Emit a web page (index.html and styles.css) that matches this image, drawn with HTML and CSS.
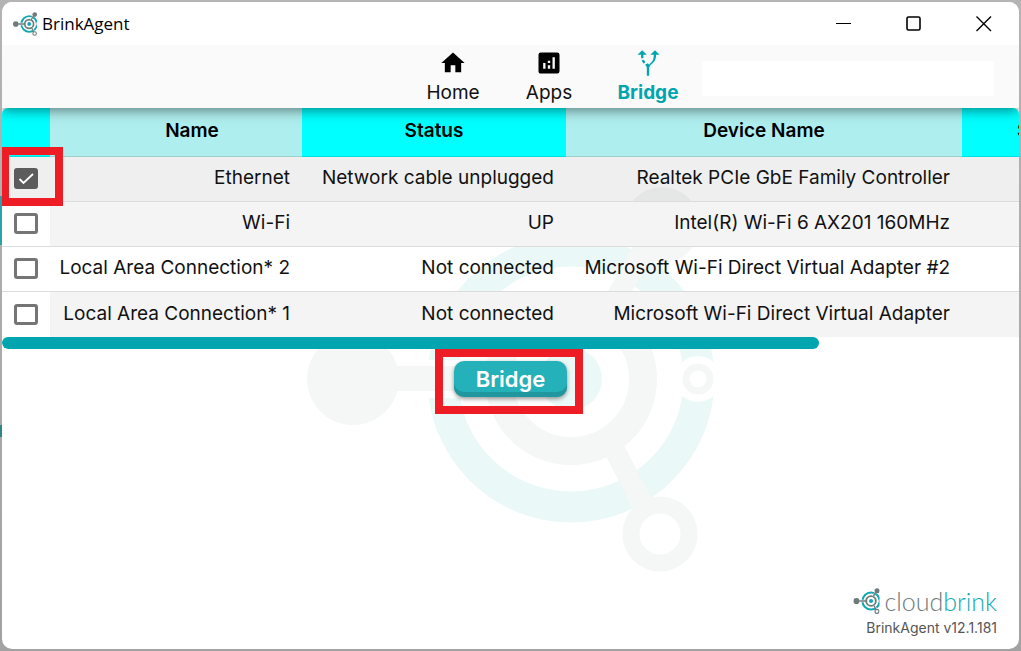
FILE: index.html
```
<!DOCTYPE html>
<html lang="en">
<head>
<meta charset="utf-8">
<meta name="viewport" content="width=device-width, initial-scale=1">
<title>BrinkAgent</title>
<link rel="stylesheet" href="styles.css">
</head>
<body>
<svg class="defs" aria-hidden="true">
  <symbol id="logo" viewBox="0 0 392 388">
    <circle cx="264" cy="194" r="128" fill="none" stroke="var(--ring)" stroke-width="31"/>
    <path d="M108 175h56v38h-56z" fill="#fff"/>
    <circle cx="264" cy="194" r="72" fill="none" stroke="var(--node)" stroke-width="28"/>
    <circle cx="264" cy="194" r="31" fill="var(--ring)"/>
    <circle cx="46" cy="194" r="46" fill="var(--node)"/>
    <path d="M90 182h98v24h-98z" fill="var(--node)"/>
    <path d="M294 124l48-84M314 256l29 58" stroke="#fff" stroke-width="25"/>
    <path d="M296 128l48-86M308 262l30 60" stroke="var(--node)" stroke-width="21"/>
    <circle cx="355" cy="40" r="38" fill="var(--node)"/>
    <circle cx="353" cy="349" r="29" fill="#fff" stroke="var(--node)" stroke-width="17"/>
    <circle cx="391" cy="194" r="23" fill="#fff"/>
    <circle cx="391" cy="194" r="12" fill="none" stroke="var(--node)" stroke-width="7"/>
  </symbol>
</svg>

<div class="window">
  <svg class="watermark" viewBox="0 0 408 388" aria-hidden="true">
    <circle cx="264" cy="194" r="128" fill="none" stroke="#ebf8f8" stroke-width="31"/>
    <path d="M108 175h56v38h-56z" fill="#fff"/>
    <circle cx="264" cy="194" r="72" fill="none" stroke="#f4f7f6" stroke-width="28"/>
    <circle cx="264" cy="194" r="31" fill="#ebf8f8"/>
    <circle cx="46" cy="194" r="46" fill="#f4f7f6"/>
    <path d="M90 181h98v25h-98z" fill="#f4f7f6"/>
    <path d="M302 126l46-82M304 258l34 66" stroke="#f4f7f6" stroke-width="21"/>
    <circle cx="355" cy="40" r="38" fill="#f4f7f6"/>
    <circle cx="353" cy="349" r="29" fill="#fff" stroke="#f4f7f6" stroke-width="17"/>
    <circle cx="391" cy="194" r="23" fill="#fff"/>
    <circle cx="391" cy="194" r="12" fill="none" stroke="#f4f7f6" stroke-width="7"/>
  </svg>

  <header class="titlebar">
    <svg class="app-icon" viewBox="0 0 408 388" aria-hidden="true"><use href="#logo" width="392" height="388"/></svg>
    <h1 class="app-title">BrinkAgent</h1>
    <div class="controls">
      <button type="button" class="control" aria-label="Minimize"><svg viewBox="0 0 16 16"><path d="M0 7.500h15" /></svg></button>
      <button type="button" class="control" aria-label="Maximize"><svg viewBox="0 0 16 16"><rect x="1" y="1" width="13" height="13" rx="1.500" stroke-width="1.600"/></svg></button>
      <button type="button" class="control" aria-label="Close"><svg viewBox="0 0 16 16"><path d="M.5.5l14.500 14.500M15 .5L.5 15" stroke-width="1.400"/></svg></button>
    </div>
  </header>

  <nav class="nav">
    <a class="tab" href="#home"><svg viewBox="0 0 24 24"><path d="M10 20v-6h4v6h5v-8h3L12 3 2 12h3v8z"/></svg>Home</a>
    <a class="tab" href="#apps"><svg viewBox="0 0 24 24"><path d="M19 3H5a2 2 0 0 0-2 2v14c0 1.100.9 2 2 2h14a2 2 0 0 0 2-2V5a2 2 0 0 0-2-2zM9 17H7v-5h2v5zm4 0h-2v-3h2v3zm0-5h-2v-2h2v2zm4 5h-2V7h2v10z"/></svg>Apps</a>
    <a class="tab active" href="#bridge" aria-current="page"><svg viewBox="0 0 24 24"><path d="M9.780 11.160l-1.420 1.420a7.280 7.280 0 0 1-1.790-2.940l1.940-.49c.32.890.77 1.500 1.270 2.010zM11 5L7 1 3 5h3.020c.02 1.110.08 2.140.19 3.170l1.940-.49C8.080 7.200 8.030 6.230 8.020 5H11zm11 0l-4-4-4 4h2.990c-.1 4.680-1.280 5.750-2.540 6.880-.5.440-1.010.92-1.450 1.550-.34-.49-.73-.88-1.130-1.240L9.460 13.600c.93.850 1.540 1.540 1.540 3.400v6h2v-6c0-2.020.71-2.660 1.790-3.630 1.780-1.540 4.080-3.280 4.200-8.370H22z"/></svg>Bridge</a>
    <div class="search-slot"><input class="search" type="text" aria-label="Search"></div>
  </nav>

  <main class="content">
    <div class="table-wrap">
      <table class="adapters">
        <colgroup><col class="c-check"><col class="c-name"><col class="c-status"><col class="c-device"><col class="c-more"></colgroup>
        <thead>
          <tr><th></th><th class="name">Name</th><th>Status</th><th>Device Name</th><th class="more">S</th></tr>
        </thead>
        <tbody>
          <tr class="selected"><td><input type="checkbox" aria-label="Ethernet" checked></td><td>Ethernet</td><td>Network cable unplugged</td><td>Realtek PCIe GbE Family Controller</td><td></td></tr>
          <tr class="alt"><td><input type="checkbox" aria-label="Wi-Fi"></td><td>Wi-Fi</td><td>UP</td><td>Intel(R) Wi-Fi 6 AX201 160MHz</td><td></td></tr>
          <tr><td><input type="checkbox" aria-label="Local Area Connection* 2"></td><td>Local Area Connection* 2</td><td>Not connected</td><td>Microsoft Wi-Fi Direct Virtual Adapter #2</td><td></td></tr>
          <tr class="alt"><td><input type="checkbox" aria-label="Local Area Connection* 1"></td><td>Local Area Connection* 1</td><td>Not connected</td><td>Microsoft Wi-Fi Direct Virtual Adapter</td><td></td></tr>
        </tbody>
      </table>
      <div class="scrolltrack"><div class="scrollthumb"></div></div>
      <div class="mark mark-check"></div>
    </div>
    <div class="actions">
      <div class="action">
        <button type="button" class="bridge">Bridge</button>
        <div class="mark mark-bridge"></div>
      </div>
    </div>
  </main>

  <footer class="footer">
    <div class="brand">
      <svg class="brand-icon" viewBox="0 0 408 388" aria-hidden="true"><use href="#logo" width="392" height="388"/></svg>
      <span class="brand-name">cloud<span class="brand-tail">brink</span></span>
    </div>
    <p class="version">BrinkAgent v12.1.181</p>
  </footer>
</div>
</body>
</html>
```

FILE: styles.css
```
:root {
  --teal: #00a5af;
  --ring: #12a9b2;
  --node: #6e7b7c;
}

* { box-sizing: border-box; }

body {
  margin: 0;
  min-height: 100vh;
  padding: 2px;
  display: flex;
  background:
    linear-gradient(#2aa3a8, #2aa3a8) 0 196px / 2px 49px no-repeat,
    linear-gradient(#2e868a, #2e868a) 0 425px / 2px 12px no-repeat,
    linear-gradient(#b4b4b4, #a2a2a2);
  font-family: Inter, "Noto Sans", sans-serif;
  font-size: 19px;
  color: #111;
}

.defs { position: absolute; width: 0; height: 0; }

.window {
  position: relative;
  flex: 1;
  min-width: 0;
  display: flex;
  flex-direction: column;
  overflow: hidden;
  border-radius: 10px;
  background: #fff;
}

.watermark {
  position: absolute;
  left: 305px;
  top: 183px;
  width: 408px;
  height: 388px;
}

.titlebar {
  position: relative;
  z-index: 3;
  display: flex;
  align-items: center;
  height: 43px;
  padding-left: 11px;
  background: #fff;
}

.app-icon { width: 25px; height: 24px; }

.app-title {
  margin: 0 auto 0 4px;
  font: 400 17px/24px "Open Sans", "Noto Sans", sans-serif;
  color: #000;
}

.controls { display: flex; }

.control {
  width: 70px;
  height: 43px;
  padding: 0;
  display: grid;
  place-items: center;
  border: 0;
  background: none;
}

.control svg {
  width: 16px;
  height: 16px;
  fill: none;
  stroke: #000;
}

.nav {
  position: relative;
  z-index: 2;
  display: flex;
  justify-content: flex-end;
  height: 63px;
  padding-right: 25px;
  background: #fafafa;
  box-shadow: 0 2px 12px rgba(0, 0, 0, .5);
}

.tab {
  width: 96px;
  padding-top: 4px;
  display: flex;
  flex-direction: column;
  align-items: center;
  gap: 4px;
  color: #111;
  line-height: 24px;
  text-decoration: none;
}

.tab svg { width: 28px; height: 28px; fill: #000; }
.tab.active { width: 102px; color: var(--teal); font-weight: 700; }
.tab.active svg { fill: var(--teal); }

.search-slot { display: flex; padding: 16px 0 12px 3px; }

.search {
  width: 292px;
  padding: 0 8px;
  border: 0;
  background: #fff;
  font: inherit;
}

.content { position: relative; flex: 1; }

.table-wrap {
  position: relative;
  overflow: hidden;
  border-radius: 6px;
}

.adapters {
  width: 1266px;
  table-layout: fixed;
  border-collapse: separate;
  border-spacing: 0;
}

.c-check { width: 48px; }
.c-name { width: 252px; }
.c-status { width: 264px; }
.c-device { width: 396px; }

.adapters th {
  height: 49px;
  padding: 0 16px 3px;
  background: #00ffff;
  border-bottom: 1px solid #00e0e0;
  font-weight: 600;
  color: #000;
}

.adapters th:nth-child(even) {
  background: #afeeee;
  border-bottom-color: #9fcfcf;
}

.adapters th.name { padding-left: 48px; }
.adapters th.more { padding-left: 55px; text-align: left; }

.adapters td {
  height: 45px;
  padding: 0 12px 3px 8px;
  border-bottom: 1px solid #dcdcdc;
  text-align: right;
  white-space: nowrap;
}

.adapters td:first-child { padding: 0 0 1px; line-height: 0; text-align: center; }
.selected td { background: rgba(0, 0, 0, .063); }
.alt td:not(:first-child) { background: #f4f4f4; }
.adapters tr:last-child td { border-bottom: 0; }

.adapters input {
  appearance: none;
  width: 24px;
  height: 21px;
  margin: 0;
  border: 3px solid #757575;
  border-radius: 3px;
  background: #fff;
  vertical-align: middle;
}

.adapters input:checked {
  border-color: #5c5c5c;
  background: #5c5c5c url("data:image/svg+xml,%3Csvg xmlns='http://www.w3.org/2000/svg' viewBox='0 0 18 15'%3E%3Cpath d='M2.500 8l4 4L16 3' fill='none' stroke='white' stroke-width='1.800'/%3E%3C/svg%3E") center / 18px 15px no-repeat;
}

.scrolltrack { height: 12px; }

.scrollthumb {
  width: 80.300%;
  height: 12px;
  border-radius: 6px;
  background: var(--teal);
}

.actions { display: flex; justify-content: center; padding-top: 12px; }
.action { position: relative; }

.bridge {
  width: 113px;
  height: 36px;
  padding: 0;
  border: 0;
  border-radius: 10px;
  background: #25b1b9;
  box-shadow: inset 0 -5px 0 #20979e, 0 2px 4px rgba(0, 0, 0, .4);
  color: #fff;
  font: 600 22px/24px Inter, "Noto Sans", sans-serif;
}

.mark { position: absolute; border: 8px solid #ee1c25; pointer-events: none; }
.mark-check { left: -1px; top: 39px; width: 62px; height: 59px; }
.mark-bridge { left: -19px; top: -12px; width: 148px; height: 65px; }

.footer {
  position: relative;
  display: flex;
  flex-direction: column;
  align-items: flex-end;
  gap: 2px;
  padding: 0 22px 11px;
}

.brand { display: flex; align-items: center; gap: 3px; }
.brand-icon { width: 28px; height: 26px; }

.brand-name {
  font: 300 25px/30px Lato, sans-serif;
  color: #6e7b7c;
}

.brand-tail { color: #12a9b2; }

.version {
  margin: 0;
  font-size: 14px;
  line-height: 20px;
  color: #555;
}
```
